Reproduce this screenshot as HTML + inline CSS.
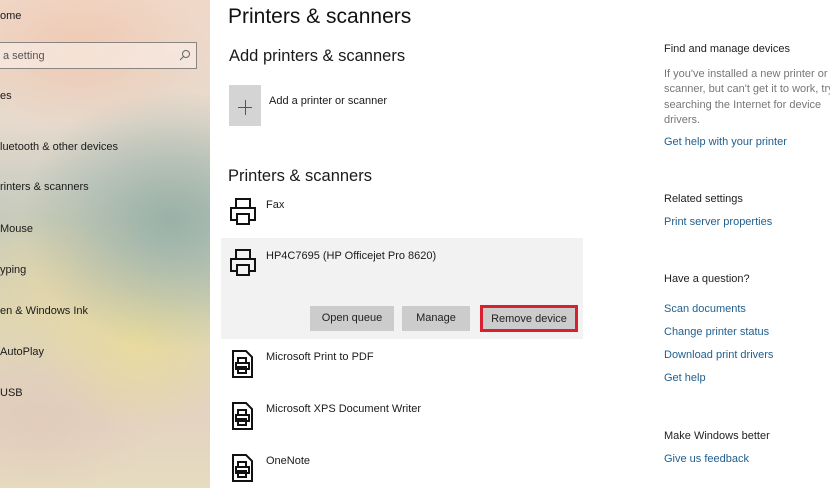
<!DOCTYPE html>
<html><head><meta charset="utf-8"><style>
*{margin:0;padding:0;box-sizing:border-box}
body{width:830px;height:488px;overflow:hidden;background:#fff;font-family:"Liberation Sans",sans-serif;position:relative;color:#111}
.side{position:absolute;left:0;top:0;width:210px;height:488px;
background:
radial-gradient(ellipse 130px 80px at 80px 50px,rgba(240,195,170,.7),transparent),
radial-gradient(ellipse 150px 130px at 170px 220px,rgba(150,175,165,.9),transparent),
radial-gradient(ellipse 110px 100px at 60px 280px,rgba(235,215,160,.6),transparent),
radial-gradient(ellipse 100px 90px at 140px 340px,rgba(235,220,150,.8),transparent),
radial-gradient(ellipse 120px 80px at 40px 420px,rgba(225,200,185,.7),transparent),
linear-gradient(180deg,#f0d8c8 0%,#e6dacd 25%,#c2c9bf 45%,#dcd6b6 65%,#e3d3c1 85%,#e6dcc0 100%);}
.t{position:absolute;white-space:nowrap;font-size:11px;color:#1a1a1a}
.search{position:absolute;left:-5px;top:42px;width:202px;height:27px;border:1px solid #8a8580;background:rgba(250,240,235,.6)}
.r{font-size:11px;color:#222}
.g{color:#777}
.l{color:#1f5f8e}
.btn{position:absolute;height:25px;background:#ccc;font-size:11px;text-align:center;line-height:25px;color:#222}
</style></head><body>
<div class="side">
<div class="t" style="left:0;top:10px">ome</div>
<div class="search"></div>
<div class="t" style="left:3px;top:50px;color:#555">a setting</div>
<svg style="position:absolute;left:179px;top:49px" width="12" height="12" viewBox="0 0 12 12" fill="none" stroke="#666" stroke-width="1"><circle cx="7" cy="5" r="3.5"/><path d="M4.5 7.5L1 11"/></svg>
<div class="t" style="left:0;top:90px">es</div>
<div class="t" style="left:0;top:141px">luetooth &amp; other devices</div>
<div class="t" style="left:0;top:181px">rinters &amp; scanners</div>
<div class="t" style="left:0;top:223px">Mouse</div>
<div class="t" style="left:0;top:264px">yping</div>
<div class="t" style="left:0;top:305px">en &amp; Windows Ink</div>
<div class="t" style="left:0;top:346px">AutoPlay</div>
<div class="t" style="left:0;top:387px">USB</div>
</div>

<div class="t" style="left:228px;top:5px;font-size:21px;color:#111">Printers &amp; scanners</div>
<div class="t" style="left:229px;top:47px;font-size:16.5px">Add printers &amp; scanners</div>
<div style="position:absolute;left:229px;top:85px;width:32px;height:41px;background:#d4d4d4"></div>
<div style="position:absolute;left:238px;top:107px;width:14px;height:1px;background:#555"></div>
<div style="position:absolute;left:245px;top:100px;width:1px;height:15px;background:#555"></div>
<div class="t" style="left:269px;top:95px">Add a printer or scanner</div>
<div class="t" style="left:228px;top:167px;font-size:16.5px">Printers &amp; scanners</div>

<div style="position:absolute;left:221px;top:238px;width:362px;height:101px;background:#f2f2f2"></div>

<svg style="position:absolute;left:229px;top:197px" width="30" height="30" viewBox="0 0 30 30" fill="none" stroke="#111" stroke-width="2"><rect x="7" y="2" width="14" height="9"/><path d="M8 23H2V11h24v12h-6"/><rect x="8" y="17" width="12" height="10"/></svg>
<div class="t" style="left:266px;top:199px">Fax</div>
<svg style="position:absolute;left:229px;top:248px" width="30" height="30" viewBox="0 0 30 30" fill="none" stroke="#111" stroke-width="2"><rect x="7" y="2" width="14" height="9"/><path d="M8 23H2V11h24v12h-6"/><rect x="8" y="17" width="12" height="10"/></svg>
<div class="t" style="left:266px;top:250px">HP4C7695 (HP Officejet Pro 8620)</div>
<div class="btn" style="left:310px;top:306px;width:84px">Open queue</div>
<div class="btn" style="left:402px;top:306px;width:68px">Manage</div>
<div class="btn" style="left:480px;top:305px;width:98px;height:27px;border:3px solid #d9202f;line-height:22px">Remove device</div>

<svg style="position:absolute;left:232px;top:350px" width="22" height="28" viewBox="0 0 22 28" fill="none" stroke="#111" stroke-width="2"><path d="M1 1h13l6 6v20H1z"/><rect x="6" y="8" width="8" height="5"/><rect x="4" y="13" width="13" height="6"/><rect x="6" y="17" width="8" height="6"/></svg>
<div class="t" style="left:266px;top:351px">Microsoft Print to PDF</div>
<svg style="position:absolute;left:232px;top:402px" width="22" height="28" viewBox="0 0 22 28" fill="none" stroke="#111" stroke-width="2"><path d="M1 1h13l6 6v20H1z"/><rect x="6" y="8" width="8" height="5"/><rect x="4" y="13" width="13" height="6"/><rect x="6" y="17" width="8" height="6"/></svg>
<div class="t" style="left:266px;top:403px">Microsoft XPS Document Writer</div>
<svg style="position:absolute;left:232px;top:454px" width="22" height="28" viewBox="0 0 22 28" fill="none" stroke="#111" stroke-width="2"><path d="M1 1h13l6 6v20H1z"/><rect x="6" y="8" width="8" height="5"/><rect x="4" y="13" width="13" height="6"/><rect x="6" y="17" width="8" height="6"/></svg>
<div class="t" style="left:266px;top:455px">OneNote</div>

<div class="t r" style="left:664px;top:43px">Find and manage devices</div>
<div class="t r g" style="left:664px;top:67px;line-height:15.3px">If you've installed a new printer or<br>scanner, but can't get it to work, try<br>searching the Internet for device<br>drivers.</div>
<div class="t r l" style="left:664px;top:136px">Get help with your printer</div>
<div class="t r" style="left:664px;top:193px">Related settings</div>
<div class="t r l" style="left:664px;top:216px">Print server properties</div>
<div class="t r" style="left:664px;top:273px">Have a question?</div>
<div class="t r l" style="left:664px;top:303px">Scan documents</div>
<div class="t r l" style="left:664px;top:326px">Change printer status</div>
<div class="t r l" style="left:664px;top:349px">Download print drivers</div>
<div class="t r l" style="left:664px;top:372px">Get help</div>
<div class="t r" style="left:664px;top:430px">Make Windows better</div>
<div class="t r l" style="left:664px;top:453px">Give us feedback</div>
</body></html>
